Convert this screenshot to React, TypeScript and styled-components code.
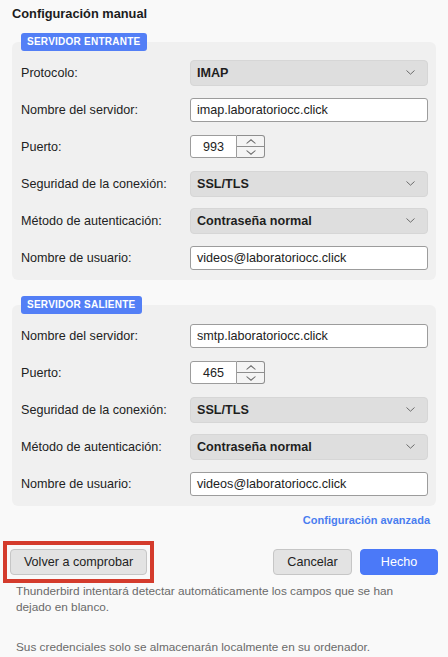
import React from "react";
import styled, { createGlobalStyle } from "styled-components";

const GlobalStyle = createGlobalStyle`
  body {
    margin: 0;
    background: #f9f9f9;
    font-family: "Liberation Sans", Arial, sans-serif;
    color: #1e1e1e;
  }
`;

const Page = styled.div`
  width: 448px;
  height: 657px;
  box-sizing: border-box;
  padding: 6px 12px 0 12px;
  display: flex;
  flex-direction: column;
  overflow: hidden;
`;

const Title = styled.h1`
  margin: 0 0 11px;
  font-size: 12.8px;
  line-height: 16px;
  font-weight: 700;
  color: #1c1c1c;
`;

const Section = styled.section<{ $gap?: number }>`
  display: flex;
  flex-direction: column;
  margin-top: ${({ $gap }) => $gap ?? 0}px;
`;

const Badge = styled.span`
  align-self: flex-start;
  position: relative;
  z-index: 1;
  margin: 0 0 -9px 9px;
  height: 18px;
  line-height: 18px;
  padding: 0 6px;
  border-radius: 3px;
  background: #537ff6;
  color: #fff;
  font-size: 10px;
  font-weight: 700;
  letter-spacing: 0.25px;
`;

const Panel = styled.div`
  background: #f0f0f0;
  border-radius: 6px;
  padding: 12px 8px 4px 9px;
  display: flex;
  flex-direction: column;
`;

const Row = styled.div`
  display: grid;
  grid-template-columns: 169px 1fr;
  align-items: center;
  height: 37px;
`;

const Label = styled.label`
  font-size: 12.6px;
  color: #222;
`;

const SelectBox = styled.div`
  height: 26px;
  box-sizing: border-box;
  border: 1px solid #d6d6d6;
  border-radius: 4px;
  background: #dedede;
  display: flex;
  align-items: center;
  justify-content: space-between;
  padding: 0 12px 0 6px;
  font-size: 12.6px;
  font-weight: 700;
  color: #1e1e1e;
`;

const TextBox = styled.div<{ $w?: number }>`
  height: 24px;
  width: ${({ $w }) => ($w ? `${$w}px` : "auto")};
  box-sizing: border-box;
  border: 1px solid #9c9c9c;
  border-radius: 3px;
  background: #fff;
  display: flex;
  align-items: center;
  padding: 0 6px;
  font-size: 12.6px;
  color: #222;
`;

const PortWrap = styled.div`
  display: flex;
  height: 23px;
`;

const PortValue = styled(TextBox)`
  height: 23px;
  width: 47px;
  justify-content: center;
  border-radius: 3px 0 0 3px;
`;

const Spinner = styled.div`
  width: 28px;
  box-sizing: border-box;
  border: 1px solid #8e8e8e;
  border-left: none;
  border-radius: 0 3px 3px 0;
  background: #f4f4f4;
  display: flex;
  flex-direction: column;
`;

const SpinHalf = styled.div<{ $top?: boolean }>`
  flex: 1;
  display: flex;
  align-items: center;
  justify-content: center;
  border-bottom: ${({ $top }) => ($top ? "1px solid #8e8e8e" : "none")};
`;

const LinkRow = styled.div`
  display: flex;
  justify-content: flex-end;
  margin-top: 7px;
  padding-right: 6px;
`;

const Link = styled.a`
  font-size: 11px;
  line-height: 14px;
  font-weight: 700;
  color: #4a7ef0;
  text-decoration: none;
`;

const ButtonRow = styled.div`
  display: flex;
  align-items: center;
  margin: 14px -2px 0 -9px;
  gap: 8px;
`;

const Highlight = styled.div`
  border: 4px solid #d43b2c;
  padding: 4px 3px;
  margin-right: auto;
  display: flex;
`;

const Button = styled.button<{ $primary?: boolean; $w: number }>`
  width: ${({ $w }) => $w}px;
  height: 26px;
  border-radius: 4px;
  font-family: inherit;
  font-size: 12.6px;
  cursor: pointer;
  border: 1px solid ${({ $primary }) => ($primary ? "#4a78f7" : "#c6c6c6")};
  background: ${({ $primary }) => ($primary ? "#4b79f8" : "#e3e3e3")};
  color: ${({ $primary }) => ($primary ? "#fff" : "#222")};
`;

const Note = styled.p<{ $top?: number }>`
  margin: ${({ $top }) => $top ?? 0}px 0 0 4px;
  max-width: 390px;
  font-size: 11.8px;
  line-height: 16px;
  color: #6a6a6a;
`;

const Chevron = ({ up, w = 9 }: { up?: boolean; w?: number }) => (
  <svg width={w} height="5" viewBox="0 0 9 5" preserveAspectRatio="none">
    <polyline
      points={up ? "0.5,4.5 4.5,0.8 8.5,4.5" : "0.5,0.5 4.5,4.2 8.5,0.5"}
      fill="none"
      stroke="#6b6b6b"
      strokeWidth="1"
    />
  </svg>
);

const Select = ({ value }: { value: string }) => (
  <SelectBox>
    <span>{value}</span>
    <Chevron />
  </SelectBox>
);

const Port = ({ value }: { value: string }) => (
  <PortWrap>
    <PortValue>{value}</PortValue>
    <Spinner>
      <SpinHalf $top>
        <Chevron up w={10} />
      </SpinHalf>
      <SpinHalf>
        <Chevron w={10} />
      </SpinHalf>
    </Spinner>
  </PortWrap>
);

export default function App() {
  return (
    <Page>
      <GlobalStyle />
      <Title>Configuración manual</Title>

      <Section>
        <Badge>SERVIDOR ENTRANTE</Badge>
        <Panel>
          <Row>
            <Label>Protocolo:</Label>
            <Select value="IMAP" />
          </Row>
          <Row>
            <Label>Nombre del servidor:</Label>
            <TextBox>imap.laboratoriocc.click</TextBox>
          </Row>
          <Row>
            <Label>Puerto:</Label>
            <Port value="993" />
          </Row>
          <Row>
            <Label>Seguridad de la conexión:</Label>
            <Select value="SSL/TLS" />
          </Row>
          <Row>
            <Label>Método de autenticación:</Label>
            <Select value="Contraseña normal" />
          </Row>
          <Row>
            <Label>Nombre de usuario:</Label>
            <TextBox>videos@laboratoriocc.click</TextBox>
          </Row>
        </Panel>
      </Section>

      <Section $gap={16}>
        <Badge>SERVIDOR SALIENTE</Badge>
        <Panel>
          <Row>
            <Label>Nombre del servidor:</Label>
            <TextBox>smtp.laboratoriocc.click</TextBox>
          </Row>
          <Row>
            <Label>Puerto:</Label>
            <Port value="465" />
          </Row>
          <Row>
            <Label>Seguridad de la conexión:</Label>
            <Select value="SSL/TLS" />
          </Row>
          <Row>
            <Label>Método de autenticación:</Label>
            <Select value="Contraseña normal" />
          </Row>
          <Row>
            <Label>Nombre de usuario:</Label>
            <TextBox>videos@laboratoriocc.click</TextBox>
          </Row>
        </Panel>
      </Section>

      <LinkRow>
        <Link href="#">Configuración avanzada</Link>
      </LinkRow>

      <ButtonRow>
        <Highlight>
          <Button $w={137}>Volver a comprobar</Button>
        </Highlight>
        <Button $w={79}>Cancelar</Button>
        <Button $primary $w={78}>Hecho</Button>
      </ButtonRow>

      <Note>
        Thunderbird intentará detectar automáticamente los campos que se han
        dejado en blanco.
      </Note>
      <Note $top={24}>
        Sus credenciales solo se almacenarán localmente en su ordenador.
      </Note>
    </Page>
  );
}
